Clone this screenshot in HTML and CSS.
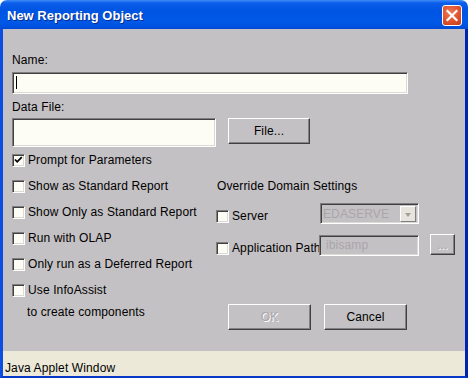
FILE: index.html
```html
<!DOCTYPE html>
<html lang="en">
<head>
    <meta charset="UTF-8">
    <title>New Reporting Object</title>
    <link rel="stylesheet" href="styles.css">
</head>
<body>
    <div class="window">
        <div class="titlebar">
            <span class="title">New Reporting Object</span>
            <span class="close">
                <svg width="18" height="19" viewBox="0 0 18 19">
                    <path d="M4.5 5 L13.5 14 M13.5 5 L4.5 14" stroke="#fff" stroke-width="2.2" stroke-linecap="square"/>
                </svg>
            </span>
        </div>
        <div class="frame">
            <div class="content">
                <label class="field-label name-label">Name:</label>
                <div class="textbox name-box"><span class="caret"></span></div>

                <label class="field-label data-label">Data File:</label>
                <div class="file-row">
                    <div class="textbox data-box"></div>
                    <button class="btn file-btn">File...</button>
                </div>

                <div class="check-row">
                    <span class="check">
                        <svg width="11" height="11" viewBox="0 0 11 11">
                            <path d="M2 4.5 L4.2 6.8 L8.8 2.2" fill="none" stroke="#000" stroke-width="1.8"/>
                        </svg>
                    </span>
                    Prompt for Parameters
                </div>

                <div class="columns">
                    <div class="left-col">
                        <div class="check-row"><span class="check"></span>Show as Standard Report</div>
                        <div class="check-row"><span class="check"></span>Show Only as Standard Report</div>
                        <div class="check-row"><span class="check"></span>Run with OLAP</div>
                        <div class="check-row"><span class="check"></span>Only run as a Deferred Report</div>
                        <div class="check-row"><span class="check"></span>Use InfoAssist</div>
                        <div class="sub-note">to create components</div>
                    </div>

                    <div class="right-col">
                        <div class="override">Override Domain Settings</div>

                        <div class="server-row">
                            <div class="opt-label"><span class="check"></span>Server</div>
                            <div class="textbox combo">
                                <span class="combo-text">EDASERVE</span>
                                <span class="combo-arrow"></span>
                            </div>
                        </div>

                        <div class="path-row">
                            <div class="opt-label path-label"><span class="check"></span>Application Path</div>
                            <div class="textbox path-box">ibisamp</div>
                            <button class="btn dots-btn" disabled>...</button>
                        </div>

                        <div class="actions">
                            <button class="btn action-btn ok-btn" disabled>OK</button>
                            <button class="btn action-btn cancel-btn">Cancel</button>
                        </div>
                    </div>
                </div>
            </div>
            <div class="statusbar">Java Applet Window</div>
        </div>
    </div>
</body>
</html>
```

FILE: styles.css
```css
body {
    margin: 0;
    background: #ffffff;
    font-family: "Liberation Sans", Arial, sans-serif;
    font-size: 12px;
    letter-spacing: 0.12px;
    color: #000;
}

.window {
    width: 468px;
    height: 378px;
    display: flex;
    flex-direction: column;
}

/* title bar */
.titlebar {
    height: 29px;
    box-sizing: border-box;
    display: flex;
    align-items: flex-start;
    border-radius: 7px 7px 0 0;
    background: linear-gradient(#3d8cf6 0, #0b5ee9 3px, #0055e3 10px, #0058e6 22px, #0050df 27px, #0047d2 29px);
}

.title {
    flex: 1;
    padding: 3px 0 0 7px;
    line-height: 26px;
    font-size: 13px;
    font-weight: bold;
    letter-spacing: 0;
    color: #fff;
    text-shadow: 1px 1px #0a2a8c;
}

.close {
    width: 20px;
    height: 21px;
    box-sizing: border-box;
    margin: 5px 6px 0 0;
    border: 1px solid #fff;
    border-radius: 3px;
    background: radial-gradient(circle at 40% 35%, #ef7a56 0, #e0522c 55%, #c23b1b 100%);
    display: flex;
}

/* frame */
.frame {
    flex: 1;
    display: flex;
    flex-direction: column;
    border: 3px solid #0a4fe2;
    border-top: 0;
    border-bottom-width: 2px;
    border-right-color: #0024b2;
    border-bottom-color: #0838c8;
}

.content {
    flex: 1;
    background: #c4c1c4;
    padding: 23px 0 0 9px;
}

.statusbar {
    height: 25px;
    box-sizing: border-box;
    background: #ece9d8;
    padding: 9px 0 0 2px;
    line-height: 16px;
}

/* fields */
.field-label {
    display: block;
    line-height: 16px;
}

.name-label {
    margin-bottom: 4px;
}

.data-label {
    margin-top: 5px;
    margin-bottom: 3px;
}

.textbox {
    box-sizing: border-box;
    border: 1px solid;
    border-color: #7f7d7f #ffffff #ffffff #7f7d7f;
    box-shadow: inset 1px 1px #404040, inset -1px -1px #dcdad4;
    background: #fdfdf6;
}

.name-box {
    width: 396px;
    height: 22px;
    padding: 3px 0 0 3px;
}

.caret {
    display: block;
    width: 1px;
    height: 13px;
    background: #000;
}

.file-row {
    display: flex;
    align-items: flex-start;
}

.data-box {
    width: 204px;
    height: 29px;
}

/* buttons */
.btn {
    box-sizing: border-box;
    padding: 0;
    font: inherit;
    letter-spacing: inherit;
    color: #000;
    background: #c4c1c4;
    border: 1px solid;
    border-color: #ffffff #404040 #404040 #ffffff;
    box-shadow: inset -1px -1px #858285;
}

.btn:disabled {
    color: #a9a6a9;
    text-shadow: 1px 1px #fff;
}

.file-btn {
    margin-left: 12px;
    width: 82px;
    height: 26px;
}

/* checkboxes */
.check-row {
    display: flex;
    align-items: center;
    height: 26px;
}

.check {
    width: 13px;
    height: 13px;
    box-sizing: border-box;
    flex-shrink: 0;
    margin-right: 3px;
    border: 1px solid;
    border-color: #7f7d7f #ffffff #ffffff #7f7d7f;
    box-shadow: inset 1px 1px #404040, inset -1px -1px #dcdad4;
    background: #fdfdf6;
    display: flex;
}

.columns {
    display: flex;
}

.left-col {
    width: 204px;
}

.sub-note {
    padding-left: 15px;
    line-height: 18px;
}

/* right column */
.override {
    height: 26px;
    line-height: 26px;
    padding-left: 1px;
}

.server-row {
    display: flex;
    align-items: flex-start;
    margin-top: 4px;
}

.opt-label {
    display: flex;
    align-items: center;
    width: 104px;
    height: 16px;
    margin-top: 5px;
    white-space: nowrap;
}

.path-label {
    width: 103px;
    margin-top: 6px;
}

.combo {
    width: 99px;
    height: 21px;
    display: flex;
    align-items: center;
    background: #c4c1c4;
    padding: 0 2px 0 2px;
}

.combo-text {
    flex: 1;
    color: #a9a6a9;
}

.combo-arrow {
    width: 16px;
    height: 16px;
    box-sizing: border-box;
    background: #e6e4dc;
    border: 1px solid;
    border-color: #ffffff #808080 #808080 #ffffff;
    position: relative;
}

.combo-arrow::after {
    content: "";
    position: absolute;
    left: 4px;
    top: 6px;
    border-left: 3px solid transparent;
    border-right: 3px solid transparent;
    border-top: 4px solid #a3a09b;
}

.path-row {
    display: flex;
    align-items: flex-start;
    margin-top: 10px;
}

.path-box {
    width: 100px;
    height: 21px;
    margin-top: 1px;
    background: #c4c1c4;
    color: #a9a6a9;
    padding-left: 6px;
    line-height: 18px;
}

.dots-btn {
    margin-left: 11px;
    width: 25px;
    height: 21px;
}

.actions {
    display: flex;
    margin-top: 48px;
}

.action-btn {
    width: 83px;
    height: 26px;
}

.ok-btn {
    margin-left: 12px;
}

.cancel-btn {
    margin-left: 13px;
}
```
